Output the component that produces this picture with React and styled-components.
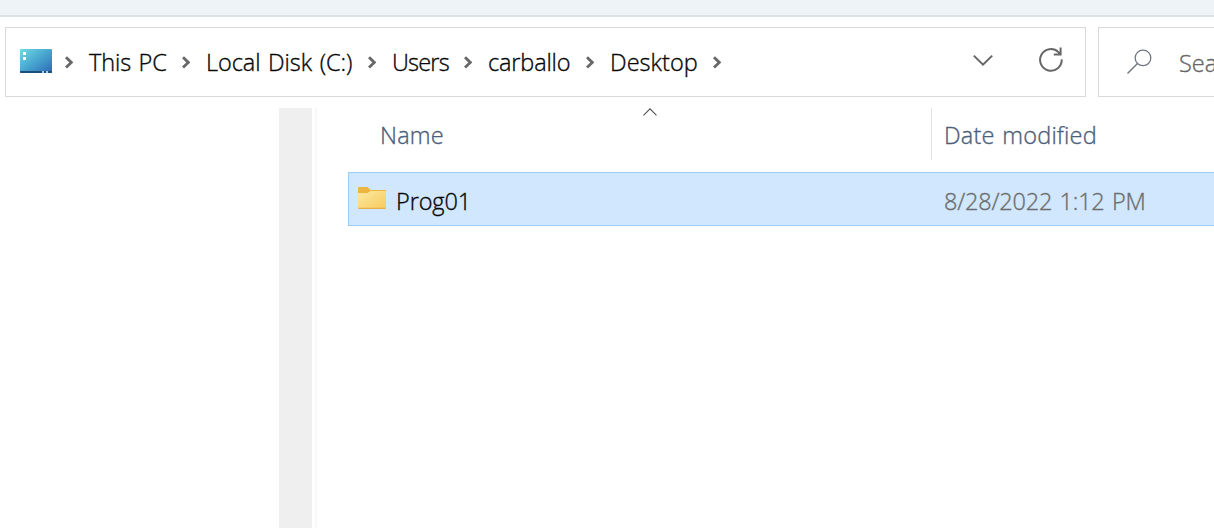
import React from "react";
import styled, { createGlobalStyle } from "styled-components";

const GlobalStyle = createGlobalStyle`
  * { box-sizing: border-box; }
  body {
    margin: 0;
    background: #fff;
    font-family: "Segoe UI", "Open Sans", "Noto Sans", sans-serif;
    font-weight: 300;
    overflow: hidden;
  }
  svg { display: block; flex: none; }
`;

const Window = styled.div`
  width: 100%;
  height: 528px;
  display: flex;
  flex-direction: column;
  overflow: hidden;
`;

const CommandBarEdge = styled.div`
  flex: none;
  height: 17px;
  background: #eef3f8;
  border-bottom: 2px solid #dce1e5;
`;

const NavigationRow = styled.div`
  flex: none;
  display: flex;
  gap: 12px;
  height: 91px;
  padding: 10px 0 11px 5px;
`;

const AddressBar = styled.div`
  flex: none;
  width: 1081px;
  height: 70px;
  border: 1px solid #d9d9d9;
  display: flex;
  align-items: center;
  padding: 0 21px 0 14px;
`;

const DeviceSlot = styled.div`
  padding-bottom: 2px;
`;

const Crumbs = styled.div`
  display: flex;
  align-items: center;
  flex: 1;
  margin-left: 13px;
  gap: 15px;
`;

const Crumb = styled.div`
  display: flex;
  align-items: center;
  gap: 16px;
`;

const Label = styled.span`
  display: block;
  width: ${(p) => (p.$width ? `${p.$width}px` : "auto")};
  font-size: 23.5px;
  line-height: 32px;
  letter-spacing: ${(p) => p.$tracking || 0}px;
  word-spacing: 1.5px;
  -webkit-text-stroke: 0.35px currentColor;
  white-space: nowrap;
  color: ${(p) => p.$color || "#060606"};
`;

const Actions = styled.div`
  display: flex;
  align-items: center;
  gap: 45px;
  padding-bottom: 5px;
`;

const SearchBox = styled.div`
  flex: none;
  width: 300px;
  height: 70px;
  border: 1px solid #d9d9d9;
  display: flex;
  align-items: center;
  gap: 27px;
  padding: 2px 0 0 28px;
`;

const SearchSlot = styled.div`
  padding-bottom: 3px;
`;

const Body = styled.div`
  flex: 1;
  display: flex;
  min-height: 0;
`;

const NavigationPane = styled.div`
  flex: none;
  width: 317px;
  padding-right: 3px;
  border-right: 2px solid #f7f7f7;
  display: flex;
  justify-content: flex-end;
`;

const ScrollTrack = styled.div`
  width: 33px;
  background: #efefef;
`;

const FileList = styled.div`
  flex: 1;
  min-width: 0;
  padding-left: 31px;
`;

const HeaderRow = styled.div`
  display: flex;
  height: 52px;
  margin-bottom: 12px;
`;

const NameHeader = styled.div`
  flex: none;
  width: 584px;
  border-right: 1px solid #e2e2e2;
  padding: 0 0 0 32px;
`;

const SortMark = styled.div`
  height: 11px;
  margin-left: -32px;
  padding-left: 20px;
  display: flex;
  justify-content: center;
`;

const DateHeader = styled.div`
  padding: 11px 0 0 12px;
`;

const FileRow = styled.div`
  display: flex;
  align-items: center;
  height: 54px;
  background: #d0e7fe;
  border: 1px solid #99cdfb;
  border-right: 0;
  border-radius: 1px 0 0 1px;
  padding: 4px 0 0 9px;
`;

const NameCell = styled.div`
  flex: none;
  width: 586px;
  display: flex;
  align-items: center;
  gap: 10px;
`;

const FolderSlot = styled.div`
  padding-bottom: 7px;
`;

const ComputerIcon = () => (
  <svg width="32" height="24" viewBox="0 0 32 24">
    <defs>
      <linearGradient id="screen" x1="0" y1="0" x2="1" y2="1">
        <stop offset="0" stopColor="#6edbe2" />
        <stop offset=".5" stopColor="#48a5cf" />
        <stop offset="1" stopColor="#2c68b5" />
      </linearGradient>
    </defs>
    <rect width="32" height="24" rx="1" fill="url(#screen)" />
    <path d="M0 22h32v1a1 1 0 0 1-1 1H1a1 1 0 0 1-1-1z" fill="#1b4f7c" />
    <path d="M3 3h3v3H3zM3 8h3v3H3z" fill="#fff" />
    <path d="M22 22h2v2h-2zM26 22h2v2h-2z" fill="#a9c9e6" />
  </svg>
);

const Chevron = () => (
  <svg width="8" height="14" viewBox="0 0 8 14">
    <path d="M1 2.2 6.3 7.4 1 12.6" fill="none" stroke="#686868" strokeWidth="2.8" />
  </svg>
);

const DownIcon = () => (
  <svg width="20" height="12" viewBox="0 0 20 12">
    <path d="M.8 1.6 10 10.6 19.2 1.6" fill="none" stroke="#666" strokeWidth="2" />
  </svg>
);

const RefreshIcon = () => (
  <svg width="26" height="26" viewBox="0 0 26 26">
    <path
      d="M23.7 12.4A10.8 10.8 0 1 1 20.4 5.1L22.8 7.6M22.6.5V7.5H15.8"
      fill="none"
      stroke="#666"
      strokeWidth="2"
    />
  </svg>
);

const SearchIcon = () => (
  <svg width="25" height="25" viewBox="0 0 25 25">
    <circle cx="16" cy="8.9" r="7.8" fill="none" stroke="#707780" strokeWidth="1.3" />
    <path d="M10.5 14.5.5 24.5" stroke="#707780" strokeWidth="1.4" />
  </svg>
);

const SortIcon = () => (
  <svg width="14" height="8" viewBox="0 0 14 8">
    <path d="M.5 7.3 7 .8l6.5 6.5" fill="none" stroke="#505050" strokeWidth="1.1" />
  </svg>
);

const FolderIcon = () => (
  <svg width="28" height="22" viewBox="0 0 28 22">
    <defs>
      <linearGradient id="folder" x1="0" y1="0" x2="1" y2="1">
        <stop offset="0" stopColor="#fde9a2" />
        <stop offset="1" stopColor="#f7ca5c" />
      </linearGradient>
    </defs>
    <path d="M0 1a1 1 0 0 1 1-1h8.5l3 3H27a1 1 0 0 1 1 1v4H0z" fill="#edb641" />
    <path d="M0 6h9.5l3-2H28v17a1 1 0 0 1-1 1H1a1 1 0 0 1-1-1z" fill="url(#folder)" />
    <path d="M0 20.8h28a1.2 1.2 0 0 1-1 1.2H1a1.2 1.2 0 0 1-1-1.2z" fill="#e6b04a" />
  </svg>
);

const path = [
  { name: "This PC", width: 78, tracking: -0.1 },
  { name: "Local Disk (C:)", width: 147, tracking: -0.05 },
  { name: "Users", width: 57, tracking: -0.8 },
  { name: "carballo", width: 83, tracking: -0.15 },
  { name: "Desktop", width: 88, tracking: 0.05 },
];

export default function App() {
  return (
    <>
      <GlobalStyle />
      <Window>
        <CommandBarEdge />
        <NavigationRow>
          <AddressBar>
            <DeviceSlot>
              <ComputerIcon />
            </DeviceSlot>
            <Crumbs>
              {path.map((item) => (
                <Crumb key={item.name}>
                  <Chevron />
                  <Label $width={item.width} $tracking={item.tracking}>{item.name}</Label>
                </Crumb>
              ))}
              <Chevron />
            </Crumbs>
            <Actions>
              <DownIcon />
              <RefreshIcon />
            </Actions>
          </AddressBar>
          <SearchBox>
            <SearchSlot>
              <SearchIcon />
            </SearchSlot>
            <Label $color="#666" $tracking={0}>Search Desktop</Label>
          </SearchBox>
        </NavigationRow>
        <Body>
          <NavigationPane>
            <ScrollTrack />
          </NavigationPane>
          <FileList>
            <HeaderRow>
              <NameHeader>
                <SortMark>
                  <SortIcon />
                </SortMark>
                <Label $color="#4c607a" $tracking={0.2}>Name</Label>
              </NameHeader>
              <DateHeader>
                <Label $color="#4c607a" $tracking={0.18}>Date modified</Label>
              </DateHeader>
            </HeaderRow>
            <FileRow>
              <NameCell>
                <FolderSlot>
                  <FolderIcon />
                </FolderSlot>
                <Label $tracking={-0.1}>Prog01</Label>
              </NameCell>
              <Label $color="#6d6d6d" $tracking={-0.2}>8/28/2022 1:12 PM</Label>
            </FileRow>
          </FileList>
        </Body>
      </Window>
    </>
  );
}
